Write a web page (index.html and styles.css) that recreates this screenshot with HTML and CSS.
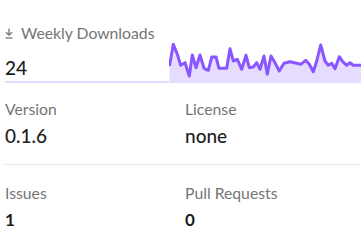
FILE: index.html
```html
<!DOCTYPE html>
<html>
<head>
<meta charset="utf-8">
<link rel="stylesheet" href="styles.css">
</head>
<body>
<div class="sidebar">
  <div class="downloads">
    <div class="dl-left">
      <h3 class="label dl-label">
        <svg class="dl-icon" width="8" height="11" viewBox="0 0 8 11"><path d="M4 0.5V7M1 4.2L4 7.2L7 4.2" fill="none" stroke="#757575" stroke-width="1.3"/><path d="M0.5 10H7.5" stroke="#757575" stroke-width="1.3"/></svg>
        Weekly Downloads
      </h3>
      <p class="value dl-value">24</p>
    </div>
    <svg class="chart" width="192" height="41" viewBox="0 0 192 41" preserveAspectRatio="none">
      <polygon class="fill" points="0.5,24 4.3,2.3 8.3,12.3 11.7,23.3 16,20.7 20.3,34 23.3,13 27,25.7 31,13 35,26.3 39.3,28.3 42.7,15 47,15 50,26.3 54.3,26.3 57.7,26.3 61,6.7 64.3,19 68.3,17.3 72.7,27.3 77,13.3 80.3,25.7 84.3,25 87.7,20.7 91,27.3 95,14 98.3,32.3 102,14 106,20.7 110.3,29 115,21.3 121,19.7 127.7,21.3 131.7,22.3 136.7,18.3 140.3,22.3 144.3,29.7 147.7,19 151.7,3 156,19 159.3,23.3 162.7,21.3 166,26.7 170.3,14.7 173.7,19.7 177.7,23.3 181,20.7 184.3,23.3 192,23.3 192,41 0.5,41"/>
      <polyline class="line" points="0.5,24 4.3,2.3 8.3,12.3 11.7,23.3 16,20.7 20.3,34 23.3,13 27,25.7 31,13 35,26.3 39.3,28.3 42.7,15 47,15 50,26.3 54.3,26.3 57.7,26.3 61,6.7 64.3,19 68.3,17.3 72.7,27.3 77,13.3 80.3,25.7 84.3,25 87.7,20.7 91,27.3 95,14 98.3,32.3 102,14 106,20.7 110.3,29 115,21.3 121,19.7 127.7,21.3 131.7,22.3 136.7,18.3 140.3,22.3 144.3,29.7 147.7,19 151.7,3 156,19 159.3,23.3 162.7,21.3 166,26.7 170.3,14.7 173.7,19.7 177.7,23.3 181,20.7 184.3,23.3 192,23.3"/>
    </svg>
  </div>
  <div class="row">
    <div class="cell">
      <h3 class="label">Version</h3>
      <p class="value">0.1.6</p>
    </div>
    <div class="cell">
      <h3 class="label">License</h3>
      <p class="value">none</p>
    </div>
  </div>
  <div class="row row-small">
    <div class="cell">
      <h3 class="label">Issues</h3>
      <p class="value small">1</p>
    </div>
    <div class="cell">
      <h3 class="label">Pull Requests</h3>
      <p class="value small">0</p>
    </div>
  </div>
</div>
</body>
</html>
```

FILE: styles.css
```css
html, body {
  margin: 0;
  padding: 0;
  background: #fff;
}
body {
  font-family: "Lato", "Open Sans", sans-serif;
  width: 361px;
  height: 240px;
  overflow: hidden;
}
.sidebar {
  padding-left: 5px;
  padding-top: 23px;
}
.label {
  margin: 0;
  font-size: 15.75px;
  font-weight: 400;
  line-height: 20px;
  color: #757575;
}
.value {
  margin: 0;
  color: #1d1d1d;
  font-size: 19px;
  font-weight: 500;
  line-height: 24px;
}
.downloads {
  display: flex;
  align-items: flex-end;
}
.dl-left {
  width: 164px;
  border-bottom: 2px solid #e3daff;
}
.dl-label {
  display: flex;
  align-items: center;
  gap: 8px;
}
.dl-icon {
  flex: none;
}
.dl-value {
  padding-top: 13px;
  padding-bottom: 1px;
}
.chart {
  display: block;
  flex: none;
}
.chart .fill {
  fill: #e6dcff;
}
.chart .line {
  fill: none;
  stroke: #8956ff;
  stroke-width: 3;
  stroke-linejoin: round;
}
.row {
  display: grid;
  grid-template-columns: 180px 1fr;
  padding-top: 16px;
  padding-bottom: 16px;
  border-bottom: 1px solid #e5e5e5;
}
.row-small {
  border-bottom: none;
  padding-top: 18px;
}
.cell .value {
  margin-top: 5px;
}
.value.small {
  font-size: 17px;
  font-weight: 700;
}
```
